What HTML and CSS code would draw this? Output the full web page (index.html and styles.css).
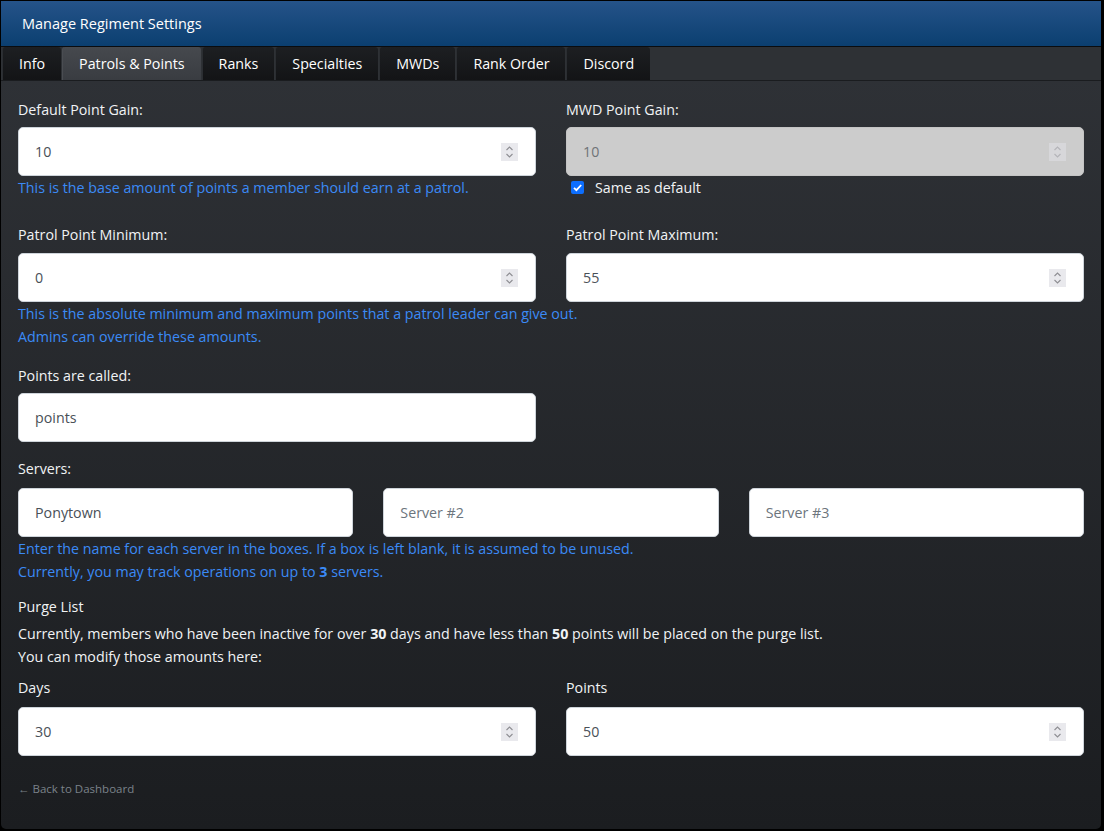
FILE: index.html
```html
<!DOCTYPE html>
<html lang="en">
<head>
<meta charset="utf-8">
<title>Manage Regiment Settings</title>
<link rel="stylesheet" href="styles.css">
</head>
<body>
<div class="panel">
  <div class="header">Manage Regiment Settings</div>
  <nav class="tabs">
    <a class="tab">Info</a>
    <a class="tab active">Patrols &amp; Points</a>
    <a class="tab">Ranks</a>
    <a class="tab">Specialties</a>
    <a class="tab">MWDs</a>
    <a class="tab">Rank Order</a>
    <a class="tab">Discord</a>
  </nav>

  <div class="content">
    <div class="row two gain">
      <div class="field">
        <label class="lbl">Default Point Gain:</label>
        <div class="num">
          <input class="num-input" type="text" value="10">
          <span class="spin"><svg viewBox="0 0 17 18" width="17" height="18"><path d="M5.5 7 8.5 4 11.5 7M5.5 11 8.5 14 11.5 11" fill="none" stroke="#8e8e93" stroke-width="1.1"/></svg></span>
        </div>
        <div class="help">This is the base amount of points a member should earn at a patrol.</div>
      </div>
      <div class="field">
        <label class="lbl">MWD Point Gain:</label>
        <div class="num disabled">
          <input class="num-input" type="text" value="10" disabled>
          <span class="spin"><svg viewBox="0 0 17 18" width="17" height="18"><path d="M5.5 7 8.5 4 11.5 7M5.5 11 8.5 14 11.5 11" fill="none" stroke="#b4b4b8" stroke-width="1.1"/></svg></span>
        </div>
        <label class="check"><span class="box"><svg viewBox="0 0 13 13" width="13" height="13"><path d="M3 6.8 5.4 9.2 10.2 4" fill="none" stroke="#fff" stroke-width="1.8"/></svg></span>Same as default</label>
      </div>
    </div>

    <div class="row two minmax">
      <div class="field">
        <label class="lbl">Patrol Point Minimum:</label>
        <div class="num">
          <input class="num-input" type="text" value="0">
          <span class="spin"><svg viewBox="0 0 17 18" width="17" height="18"><path d="M5.5 7 8.5 4 11.5 7M5.5 11 8.5 14 11.5 11" fill="none" stroke="#8e8e93" stroke-width="1.1"/></svg></span>
        </div>
      </div>
      <div class="field">
        <label class="lbl">Patrol Point Maximum:</label>
        <div class="num">
          <input class="num-input" type="text" value="55">
          <span class="spin"><svg viewBox="0 0 17 18" width="17" height="18"><path d="M5.5 7 8.5 4 11.5 7M5.5 11 8.5 14 11.5 11" fill="none" stroke="#8e8e93" stroke-width="1.1"/></svg></span>
        </div>
      </div>
    </div>
    <div class="help help-block minmax-help">This is the absolute minimum and maximum points that a patrol leader can give out.<br>Admins can override these amounts.</div>

    <div class="row two called">
      <div class="field">
        <label class="lbl">Points are called:</label>
        <div class="num"><input class="num-input" type="text" value="points"></div>
      </div>
    </div>

    <div class="servers">
      <label class="lbl">Servers:</label>
      <div class="row three">
        <div class="num"><input class="num-input" type="text" value="Ponytown"></div>
        <div class="num"><input class="num-input" type="text" placeholder="Server #2"></div>
        <div class="num"><input class="num-input" type="text" placeholder="Server #3"></div>
      </div>
      <div class="help">Enter the name for each server in the boxes. If a box is left blank, it is assumed to be unused.<br>Currently, you may track operations on up to <b>3</b> servers.</div>
    </div>

    <div class="purge">
      <div class="purge-title">Purge List</div>
      <p class="purge-text">Currently, members who have been inactive for over <b>30</b> days and have less than <b>50</b> points will be placed on the purge list.<br>You can modify those amounts here:</p>
      <div class="row two">
        <div class="field">
          <label class="lbl">Days</label>
          <div class="num">
            <input class="num-input" type="text" value="30">
            <span class="spin"><svg viewBox="0 0 17 18" width="17" height="18"><path d="M5.5 7 8.5 4 11.5 7M5.5 11 8.5 14 11.5 11" fill="none" stroke="#8e8e93" stroke-width="1.1"/></svg></span>
          </div>
        </div>
        <div class="field">
          <label class="lbl">Points</label>
          <div class="num">
            <input class="num-input" type="text" value="50">
            <span class="spin"><svg viewBox="0 0 17 18" width="17" height="18"><path d="M5.5 7 8.5 4 11.5 7M5.5 11 8.5 14 11.5 11" fill="none" stroke="#8e8e93" stroke-width="1.1"/></svg></span>
          </div>
        </div>
      </div>
    </div>

    <a class="back">&larr; Back to Dashboard</a>
  </div>
</div>
</body>
</html>
```

FILE: styles.css
```css
* { box-sizing: border-box; }

html, body {
  margin: 0;
  background: #000;
}

body {
  font-family: "Open Sans", "Noto Sans", sans-serif;
  font-size: 14.25px;
  line-height: 23px;
  color: #f1f3f5;
}

.panel {
  width: 1100px;
  height: 828px;
  margin: 1px 0 0 1px;
  border-radius: 0 0 5px 5px;
  overflow: hidden;
  display: flex;
  flex-direction: column;
  background: linear-gradient(#303338, #1b1d20);
}

/* title bar */
.header {
  height: 46px;
  padding: 0 21px;
  display: flex;
  align-items: center;
  color: #fff;
  font-size: 14.5px;
  background: linear-gradient(#255389, #0b3f70);
  border-bottom: 1px solid #0a0c0f;
}

/* tab strip */
.tabs {
  display: flex;
  height: 34px;
  padding-left: 1px;
  gap: 1px;
  background: #2e3135;
  border-bottom: 1px solid #1a1c1f;
}

.tab {
  display: flex;
  align-items: center;
  padding: 0 16px;
  color: #fff;
  font-size: 14.25px;
  border-radius: 3px 3px 0 0;
  background: linear-gradient(#1d1f22, #131416);
  border-left: 1px solid #2b2e32;
}

.tab.active {
  background: linear-gradient(#46494e, #393c41);
  border-left-color: #4a4d52;
}

.content {
  padding: 17px 17px 0 17px;
  display: flex;
  flex-direction: column;
}

.row.two {
  display: grid;
  grid-template-columns: 1fr 1fr;
  column-gap: 30px;
}

.row.three {
  display: grid;
  grid-template-columns: 1fr 1fr 1fr;
  column-gap: 30px;
}

.field { display: flex; flex-direction: column; }

.lbl {
  display: block;
  color: #f1f3f5;
  margin-bottom: 6px;
}

/* text box with optional stepper */
.num {
  height: 49px;
  display: flex;
  align-items: center;
  background: #fff;
  border: 1px solid #ced4da;
  border-radius: 5px;
  padding: 0 17px 0 16px;
}

.num-input {
  flex: 1;
  min-width: 0;
  border: 0;
  outline: 0;
  background: transparent;
  font: inherit;
  font-size: 14.25px;
  color: #495057;
  padding: 0;
}

.num-input::placeholder { color: #6c757d; }

.num.disabled { background: #cccccc; border-color: #c4c4c4; }
.num.disabled .num-input { color: #6f7377; }

.spin {
  width: 17px;
  height: 18px;
  display: flex;
  background: #e9e9ed;
}
.num.disabled .spin { background: #d7d7da; }

.help {
  color: #3b8af6;
}

.check {
  display: flex;
  align-items: center;
  height: 23px;
  padding-left: 5px;
  color: #f1f3f5;
}

.check .box {
  width: 13px;
  height: 13px;
  margin-right: 11px;
  border-radius: 2px;
  background: #0d6efd;
  display: flex;
}

.gain { margin-bottom: 24px; }
.minmax .lbl { margin-bottom: 7px; }
.minmax-help { margin-bottom: 16px; }
.called { margin-bottom: 15px; }

.servers .lbl { margin-bottom: 8px; }
.servers { margin-bottom: 12px; }

.purge-title { margin-bottom: 4px; }
.purge-text { margin: 0 0 8px; }
.purge .lbl { margin-bottom: 8px; }

.back {
  margin-top: 24px;
  font-size: 11.5px;
  line-height: 18px;
  color: #7b828a;
}
```
